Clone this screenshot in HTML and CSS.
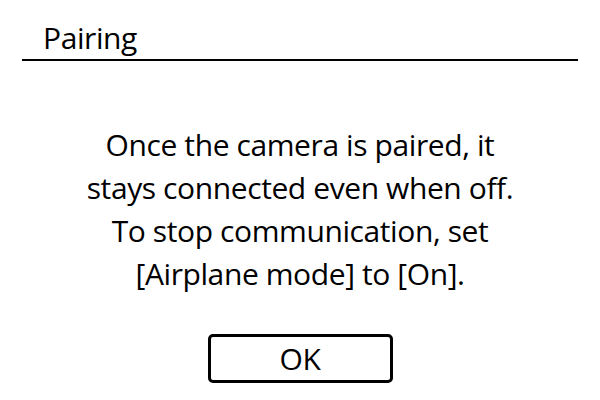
FILE: index.html
```html
<!DOCTYPE html>
<html lang="en">
<head>
<meta charset="utf-8">
<title>Pairing</title>
<link rel="stylesheet" href="styles.css">
</head>
<body>
  <div class="screen">
    <header class="header">
      <h1 class="title">Pairing</h1>
    </header>
    <p class="message">Once the camera is paired, it<br>stays connected even when off.<br>To stop communication, set<br>[Airplane mode] to [On].</p>
    <div class="actions">
      <button class="btn" type="button">OK</button>
    </div>
  </div>
</body>
</html>
```
FILE: styles.css
```css
html, body {
  margin: 0;
  padding: 0;
  background: #fff;
}

.screen {
  width: 600px;
  height: 400px;
  font-family: "Open Sans", "Noto Sans", sans-serif;
  letter-spacing: -0.4px;
  color: #000;
  display: flex;
  flex-direction: column;
}

.header {
  margin: 0 22px;
  padding: 20px 0 3px 21px;
  border-bottom: 2px solid #000;
}

.title {
  margin: 0;
  font-size: 30px;
  font-weight: 400;
  line-height: 36px;
}

.message {
  margin: 62px 0 0;
  font-size: 30px;
  line-height: 43px;
  text-align: center;
}

.actions {
  display: flex;
  justify-content: center;
  margin-top: 39px;
}

.btn {
  width: 185px;
  height: 49px;
  box-sizing: border-box;
  border: 3px solid #000;
  border-radius: 5px;
  background: #fff;
  color: #000;
  font-family: inherit;
  letter-spacing: inherit;
  font-size: 30px;
  line-height: 43px;
  padding: 0;
}
```
